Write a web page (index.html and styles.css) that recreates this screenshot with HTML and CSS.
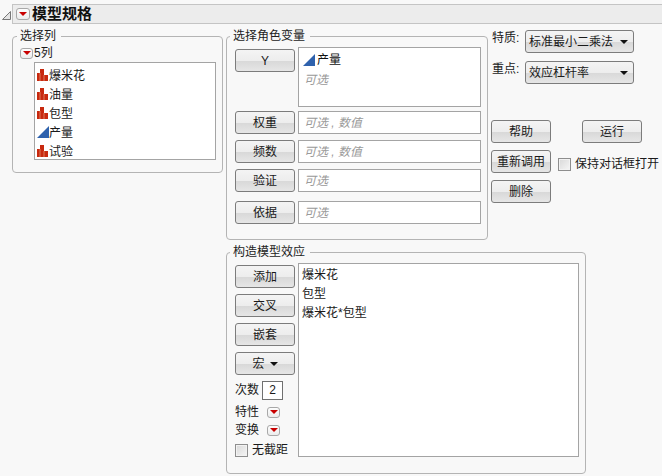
FILE: index.html
```html
<!DOCTYPE html>
<html lang="zh">
<head>
<meta charset="utf-8">
<title>模型规格</title>
<link rel="stylesheet" href="styles.css">
</head>
<body>
<header class="titlerow">
  <svg class="disclosure" width="9" height="9" viewBox="0 0 9 9"><path d="M8.500 .5V8.500H.5Z" fill="#e4e4e4" stroke="#777"/></svg>
  <div class="titlebar">
    <span class="menu-btn"><i></i></span>
    <h1>模型规格</h1>
  </div>
</header>
<div class="top">
  <fieldset class="group columns">
    <legend>选择列</legend>
    <div class="count"><span class="menu-btn small"><i></i></span><span>5列</span></div>
    <ul class="box collist">
      <li><svg class="ico" width="12" height="12" viewBox="0 0 12 12"><path d="M0 4h3V0h4v6h4v6H0z" fill="#c8290f"/><path d="M3 4v8M7 6v6" stroke="#e8a080" stroke-width=".7"/></svg>爆米花</li>
      <li><svg class="ico" width="12" height="12" viewBox="0 0 12 12"><path d="M0 4h3V0h4v6h4v6H0z" fill="#c8290f"/><path d="M3 4v8M7 6v6" stroke="#e8a080" stroke-width=".7"/></svg>油量</li>
      <li><svg class="ico" width="12" height="12" viewBox="0 0 12 12"><path d="M0 4h3V0h4v6h4v6H0z" fill="#c8290f"/><path d="M3 4v8M7 6v6" stroke="#e8a080" stroke-width=".7"/></svg>包型</li>
      <li><svg class="ico" width="12" height="12" viewBox="0 0 12 12"><path d="M12 0V12H0Z" fill="#2f62ad"/></svg>产量</li>
      <li><svg class="ico" width="12" height="12" viewBox="0 0 12 12"><path d="M0 4h3V0h4v6h4v6H0z" fill="#c8290f"/><path d="M3 4v8M7 6v6" stroke="#e8a080" stroke-width=".7"/></svg>试验</li>
    </ul>
  </fieldset>
  <fieldset class="group roles">
    <legend>选择角色变量</legend>
    <div class="role y-role">
      <button class="btn">Y</button>
      <div class="box slot tall">
        <div class="slot-item"><svg class="ico" width="12" height="12" viewBox="0 0 12 12"><path d="M12 0V12H0Z" fill="#2f62ad"/></svg>产量</div>
        <div class="hint">可选</div>
      </div>
    </div>
    <div class="role"><button class="btn">权重</button><div class="box slot hint">可选 , 数值</div></div>
    <div class="role"><button class="btn">频数</button><div class="box slot hint">可选 , 数值</div></div>
    <div class="role"><button class="btn">验证</button><div class="box slot hint">可选</div></div>
    <div class="role last"><button class="btn">依据</button><div class="box slot hint">可选</div></div>
  </fieldset>
  <aside class="side">
    <div class="field"><label>特质:</label><div class="btn select">标准最小二乘法<i class="caret"></i></div></div>
    <div class="field"><label>重点:</label><div class="btn select">效应杠杆率<i class="caret"></i></div></div>
    <div class="actions">
      <button class="btn">帮助</button>
      <button class="btn run">运行</button>
      <button class="btn">重新调用</button>
      <label class="check keep"><span class="cb"></span>保持对话框打开</label>
      <button class="btn">删除</button>
    </div>
  </aside>
</div>
<fieldset class="group model">
  <legend>构造模型效应</legend>
  <div class="model-left">
    <button class="btn">添加</button>
    <button class="btn">交叉</button>
    <button class="btn">嵌套</button>
    <button class="btn">宏<i class="caret"></i></button>
    <div class="degree"><span>次数</span><span class="num">2</span></div>
    <div class="opt"><span>特性</span><span class="menu-btn small"><i></i></span></div>
    <div class="opt"><span>变换</span><span class="menu-btn small"><i></i></span></div>
    <label class="check nointercept"><span class="cb"></span>无截距</label>
  </div>
  <ul class="box effects">
    <li>爆米花</li>
    <li>包型</li>
    <li>爆米花*包型</li>
  </ul>
</fieldset>
</body>
</html>
```
FILE: styles.css
```css
* { box-sizing: border-box; }
html, body { margin: 0; padding: 0; }
body {
  width: 662px;
  height: 476px;
  overflow: hidden;
  background: #f8f8f8;
  color: #1a1a1a;
  font: 12px/18px "Liberation Sans", "Noto Sans CJK SC", sans-serif;
}
ul { list-style: none; margin: 0; padding: 0; }

.titlerow {
  display: flex;
  align-items: center;
  height: 20px;
  margin-top: 4px;
  padding-left: 2px;
}
.disclosure { flex: none; margin-top: 3px; }
.titlebar {
  display: flex;
  align-items: center;
  flex: 1;
  height: 20px;
  margin-left: 1px;
  padding-left: 3px;
  background: #ececec;
  border: 1px solid #c4c4c4;
  border-right: 0;
}
.titlebar h1 {
  margin: 0;
  padding-left: 2px;
  font-size: 15px;
  font-weight: 700;
  line-height: 18px;
  color: #111;
}
.menu-btn {
  display: inline-flex;
  align-items: center;
  justify-content: center;
  flex: none;
  width: 14px;
  height: 12px;
  border: 1px solid #a8a8a8;
  border-radius: 3px;
  background: linear-gradient(#fdfdfd, #ececec);
}
.menu-btn i {
  width: 0;
  height: 0;
  border: 4px solid transparent;
  border-top: 4px solid #c80000;
  border-bottom: 0;
}
.menu-btn.small { width: 13px; height: 11px; }

.group {
  margin: 0;
  padding: 0;
  border: 1px solid #b4b4b4;
  border-radius: 4px;
  min-width: 0;
}
.group legend {
  margin-left: -5px;
  padding: 0 5px 0 3px;
  line-height: 15px;
  color: #222;
}
.columns legend { margin-left: -3px; }

.top { display: flex; align-items: flex-start; margin: 5px 0 0 12px; }
.columns {
  width: 211px;
  height: 144px;
  padding: 3px 6px 0 7px;
}
.count { display: flex; align-items: center; height: 14px; gap: 1px; margin-top: -1px; }
.collist {
  margin: 2px 0 0 14px;
  height: 98px;
  padding: 3px 0 0 2px;
}
.collist li { display: flex; align-items: center; height: 19px; }
.ico { flex: none; margin-top: -2px; }
.box { background: #fff; border: 1px solid #a4a4a4; }

.roles {
  width: 262px;
  height: 211px;
  margin-left: 3px;
  padding: 3px 6px 0 8px;
}
.role { display: flex; gap: 3px; height: 23px; margin-bottom: 6px; }
.role.y-role { height: 60px; margin-bottom: 4px; }
.role.y-role .btn { margin-top: 2px; }
.role.last { margin-top: 9px; margin-bottom: 0; }
.btn {
  display: block;
  flex: none;
  width: 60px;
  height: 23px;
  padding: 0;
  border: 1px solid #7c7c7c;
  border-radius: 3px;
  background: linear-gradient(#f4f4f4 0, #ededed 50%, #d8d8d8 52%, #e6e6e6 100%);
  color: #1a1a1a;
  font: inherit;
  text-align: center;
}
.slot { flex: 1; padding: 2px 0 0 5px; height: 23px; }
.slot.tall { height: 60px; padding: 3px 0 0 4px; }
.slot-item { display: flex; align-items: center; color: #111; height: 18px; }
.slot-item .ico { margin-top: 0; margin-right: 2px; }
.hint { color: #9a9a9a; font-style: italic; }
.tall .hint { margin: 2px 0 0 1px; }

.side { width: 160px; margin: 1px 0 0 3px; }
.field { display: flex; height: 23px; margin-bottom: 8px; margin-left: 1px; }
.field label { width: 33px; line-height: 16px; }
.select {
  position: relative;
  width: 109px;
  padding-left: 3px;
  line-height: 23px;
  text-align: left;
}
.caret {
  position: absolute;
  right: 5px;
  top: 9px;
  width: 0;
  height: 0;
  border: 4px solid transparent;
  border-top: 4px solid #111;
  border-bottom: 0;
}
.actions {
  display: grid;
  grid-template-columns: 60px auto;
  column-gap: 7px;
  row-gap: 7px;
  margin-top: 36px;
  align-items: center;
}
.run { margin-left: 24px; }
.check { display: flex; align-items: center; }
.cb {
  flex: none;
  width: 13px;
  height: 13px;
  border: 1px solid #8e8e8e;
  background: linear-gradient(135deg, #d8d8d8, #f6f6f6);
  box-shadow: inset 0 0 0 1px #f2f2f2;
}
.keep { gap: 4px; white-space: nowrap; align-self: end; }

.model {
  display: flex;
  gap: 3px;
  width: 360px;
  height: 229px;
  margin: 5px 0 0 226px;
  padding: 5px 6px 0 8px;
}
.model-left { width: 60px; flex: none; display: flex; flex-direction: column; }
.model-left .btn { margin-bottom: 6px; }
.model-left .btn .caret { position: static; display: inline-block; margin: 0 0 1px 5px; vertical-align: middle; }
.degree { display: flex; align-items: center; gap: 3px; height: 18px; }
.num {
  width: 21px;
  height: 19px;
  border: 1px solid #707070;
  background: #fff;
  text-align: center;
  line-height: 17px;
}
.opt { display: flex; align-items: center; gap: 8px; height: 18px; }
.degree + .opt { margin-top: 4px; }
.nointercept { gap: 4px; height: 20px; white-space: nowrap; margin-top: 1px; }
.effects { flex: 1; height: 194px; margin-top: -2px; padding: 2px 0 0 3px; }
.effects li { height: 19px; line-height: 18px; }
```
